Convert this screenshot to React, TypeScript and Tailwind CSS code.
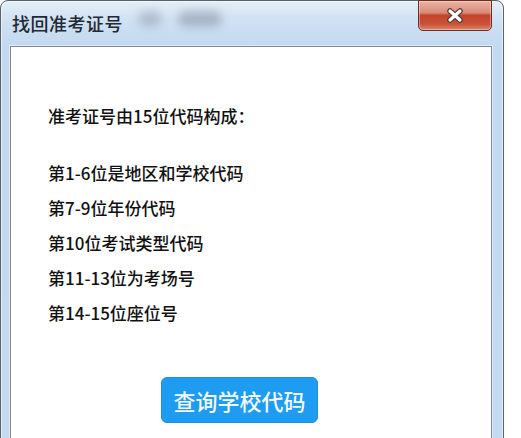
import React from "react";

const lines = ["第1-6位是地区和学校代码", "第7-9位年份代码", "第10位考试类型代码", "第11-13位为考场号", "第14-15位座位号"];

function CloseButton() {
  return (
    <div className="mr-[0px] mt-[-1px] flex h-[31px] w-[74px] items-center justify-center rounded-b-[5px] border border-[#6e2b22] bg-[linear-gradient(to_bottom,#ebb3a6_0%,#d98a78_40%,#c6432b_50%,#c9523a_80%,#dd8a6a_100%)] shadow-[inset_0_0_0_1px_rgba(255,255,255,0.35)]">
      <svg width="18" height="15" viewBox="0 0 18 15">
        <path d="M4 3 L14 12 M14 3 L4 12" stroke="#4a3a36" strokeWidth="5.6" strokeLinecap="round" />
        <path d="M4 3 L14 12 M14 3 L4 12" stroke="#ffffff" strokeWidth="3.2" strokeLinecap="round" />
      </svg>
    </div>
  );
}

export default function App() {
  return (
    <div className="relative h-[438px] w-[521px] overflow-hidden bg-white font-['Noto_Sans_CJK_SC','Noto_Sans',sans-serif]">
      <div className="flex h-[470px] w-[504px] flex-col rounded-t-[8px] border border-[#56616c] bg-[linear-gradient(to_bottom,#e4eef8_0px,#cfe1f3_20px,#c2d9f0_45px,#c3daf1_100%)] pl-[9px] pr-[11px] shadow-[inset_0_0_0_1px_rgba(255,255,255,0.6)]">
        <div className="relative flex h-[45px] items-start justify-between">
          <div className="absolute left-[128px] top-[10px] h-[16px] w-[24px] rounded-full bg-[#9aa8b8] opacity-60 blur-[5px]" />
          <div className="absolute left-[168px] top-[10px] h-[16px] w-[44px] rounded-full bg-[#8a98a8] opacity-60 blur-[5px]" />
          <div className="relative ml-[2px] mt-[11px] text-[18px] font-medium leading-[22px] tracking-[0.5px] text-[#1f2a33]">找回准考证号</div>
          <CloseButton />
        </div>
        <div className="flex-1 border border-[#7d8996] bg-white pl-[37px] pt-[51px] text-[17px] font-medium leading-[35px] text-[#111111] shadow-[0_0_0_1px_#dfeaf6]">
          <div>准考证号由15位代码构成：</div>
          <div className="mt-[22px] flex flex-col">
            {lines.map((l) => (
              <div key={l}>{l}</div>
            ))}
          </div>
          <button className="ml-[113px] mt-[47px] flex h-[46px] w-[157px] items-center justify-center rounded-[6px] border border-[#1b8ee0] bg-[#1d9cf2] text-[22px] text-[#f4f9ff]">
            查询学校代码
          </button>
        </div>
      </div>
    </div>
  );
}
